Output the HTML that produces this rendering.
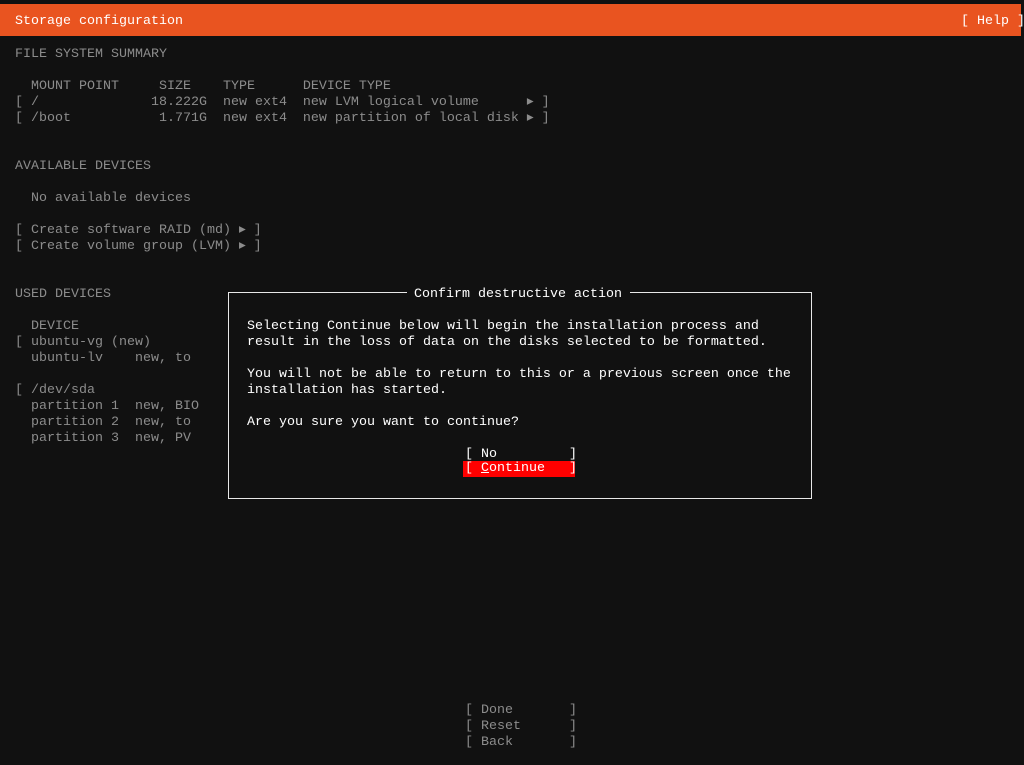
<!DOCTYPE html>
<html><head><meta charset="utf-8"><style>
body{margin:0;width:1024px;height:765px;background:#111;overflow:hidden;position:relative;font-family:"Liberation Mono",monospace;font-size:13.33px;color:#8c8c8c}
.l{position:absolute;white-space:pre;line-height:16px;height:16px;margin-top:2px}
#hdr{position:absolute;left:0;top:4px;width:1021px;height:32px;background:#e95420}
.w{color:#fff}
#dlg{position:absolute;left:228px;top:292px;width:582px;height:205px;border:1px solid #e8e8e8;background:#111}
</style></head><body>
<div id="hdr"></div>
<div class="l w" style="left:15px;top:12px">Storage configuration</div>
<div class="l w" style="left:961px;top:12px">[ Help ]</div>
<div class="l" style="left:15px;top:45px">FILE SYSTEM SUMMARY</div>
<div class="l" style="left:15px;top:77px">  MOUNT POINT     SIZE    TYPE      DEVICE TYPE</div>
<div class="l" style="left:15px;top:93px">[ /              18.222G  new ext4  new LVM logical volume      ▸ ]</div>
<div class="l" style="left:15px;top:109px">[ /boot           1.771G  new ext4  new partition of local disk ▸ ]</div>
<div class="l" style="left:15px;top:157px">AVAILABLE DEVICES</div>
<div class="l" style="left:15px;top:189px">  No available devices</div>
<div class="l" style="left:15px;top:221px">[ Create software RAID (md) ▸ ]</div>
<div class="l" style="left:15px;top:237px">[ Create volume group (LVM) ▸ ]</div>
<div class="l" style="left:15px;top:285px">USED DEVICES</div>
<div class="l" style="left:15px;top:317px">  DEVICE</div>
<div class="l" style="left:15px;top:333px">[ ubuntu-vg (new)</div>
<div class="l" style="left:15px;top:349px">  ubuntu-lv    new, to</div>
<div class="l" style="left:15px;top:381px">[ /dev/sda</div>
<div class="l" style="left:15px;top:397px">  partition 1  new, BIO</div>
<div class="l" style="left:15px;top:413px">  partition 2  new, to</div>
<div class="l" style="left:15px;top:429px">  partition 3  new, PV</div>
<div id="dlg"></div>
<div class="l w" style="left:407px;top:285px;background:#111;padding:0 8px 0 7px">Confirm destructive action</div>
<div class="l w" style="left:247px;top:317px">Selecting Continue below will begin the installation process and</div>
<div class="l w" style="left:247px;top:333px">result in the loss of data on the disks selected to be formatted.</div>
<div class="l w" style="left:247px;top:365px">You will not be able to return to this or a previous screen once the</div>
<div class="l w" style="left:247px;top:381px">installation has started.</div>
<div class="l w" style="left:247px;top:413px">Are you sure you want to continue?</div>
<div class="l w" style="left:465px;top:445px">[ No         ]</div>
<div style="position:absolute;left:463px;top:461px;width:112px;height:16px;background:#f00"></div>
<div class="l w" style="left:465px;top:459px">[ <u>C</u>ontinue   ]</div>
<div class="l" style="left:465px;top:701px">[ Done       ]</div>
<div class="l" style="left:465px;top:717px">[ Reset      ]</div>
<div class="l" style="left:465px;top:733px">[ Back       ]</div>
</body></html>
